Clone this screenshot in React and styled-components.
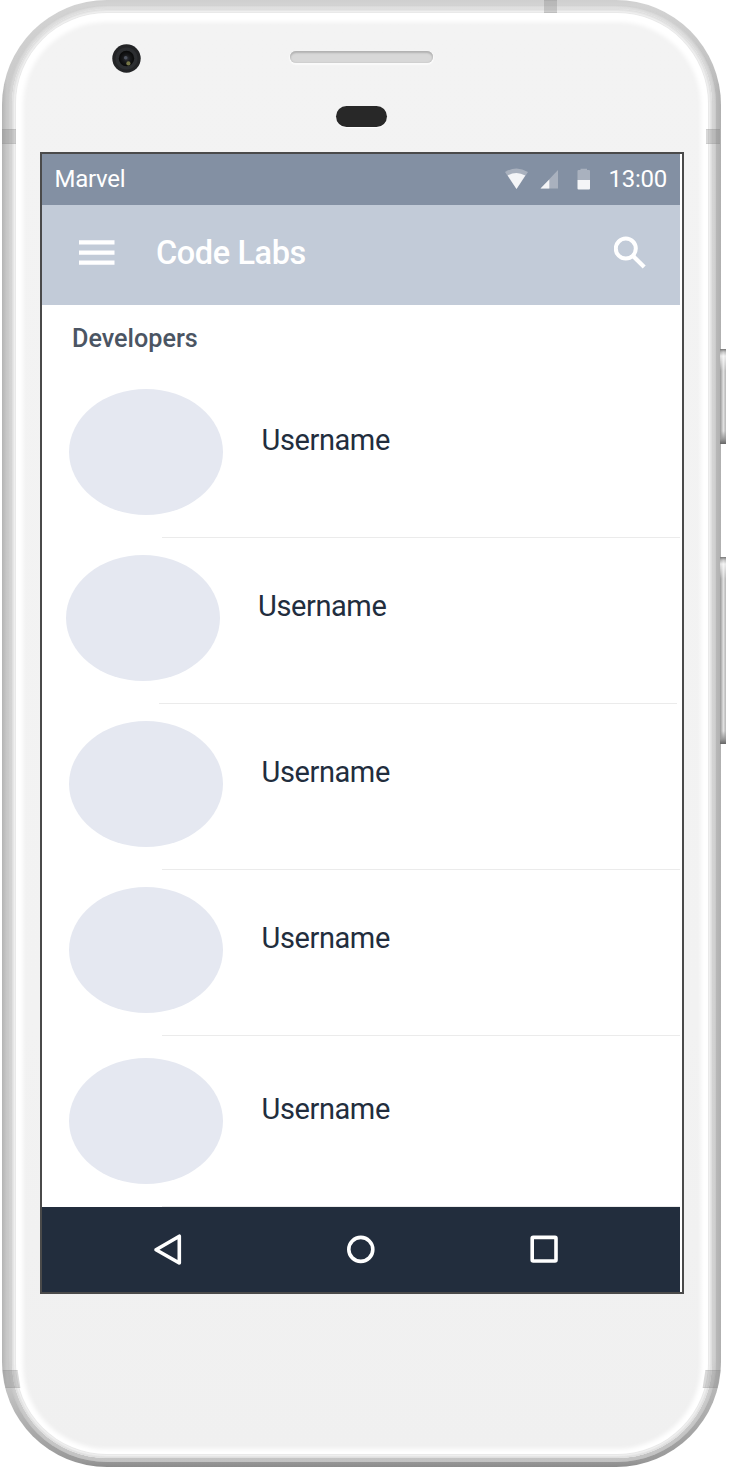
import React from "react";
import styled, { createGlobalStyle } from "styled-components";

const GlobalStyle = createGlobalStyle`
  * { box-sizing: border-box; }
  body { margin: 0; background: #fff; font-family: Roboto, "Liberation Sans", sans-serif; overflow: hidden; }
`;

const Stage = styled.main`
  position: relative;
  width: 726px;
  height: 1470px;
  padding-left: 2px;
  overflow: hidden;
`;

const Chassis = styled.div`
  width: 718.5px;
  height: 1467px;
  padding: 5px 5px 5px 6px;
  border-radius: 105px;
  background: linear-gradient(180deg, #cfcfcf 0, #d3d3d3 5px, rgba(211, 211, 211, 0) 90px, rgba(150, 150, 150, 0) 1380px, #999 1461px, #8c8c8c 100%),
    linear-gradient(90deg, #b4b4b4, #c9c9c9 5px, #c9c9c9 50%, #bababa 713px, #b0b0b0);
`;

const Rim = styled.div`
  height: 100%;
  padding: 4px;
  border-radius: 99px;
  background: linear-gradient(180deg, #e0e0e0, #d5d5d5 100px, #d2d2d2 1350px, #c4c4c4);
  box-shadow: inset 0 0 2px 1px rgba(190, 190, 190, 0.6);
`;

const Bevel = styled.div`
  height: 100%;
  padding: 4px;
  border-radius: 95px;
  background: #e9e9e9;
  box-shadow: inset 0 0 0 1px #dfdfdf, inset 0 0 0 2px #e6e6e6, inset 0 0 0 3px #efefef;
`;

const Face = styled.div`
  height: 100%;
  padding: 0 0 0 24px;
  border-radius: 91px;
  background: linear-gradient(180deg, #f3f3f3, #f2f2f2 70%, #f0f0f0);
  box-shadow: inset 0 2px 4px 7px #fff;
`;

const Bezel = styled.header`
  display: grid;
  grid-template-columns: 29px 143px;
  grid-template-rows: 29px 21px;
  column-gap: 149px;
  row-gap: 33px;
  align-items: center;
  height: 139px;
  padding: 31px 0 0 71.5px;
`;

const Camera = styled.svg`
  display: block;
  width: 29px;
  height: 29px;
`;

const Speaker = styled.div`
  height: 12px;
  margin-top: -3px;
  border-radius: 6px;
  background: #d8d8d8;
  box-shadow: inset 0 2px 2px #b2b2b2, inset 0 0 2px #bbb, 0 1px 1px 1px #fafafa;
`;

const Sensor = styled.div`
  grid-column: 2;
  justify-self: center;
  width: 51px;
  height: 21px;
  border-radius: 11px;
  background: #282828;
  box-shadow: 0 1px 1px #fff;
`;

const Screen = styled.section`
  display: flex;
  flex-direction: column;
  width: 644px;
  height: 1142px;
  padding-right: 2px;
  border: 2px solid #4a4a4a;
  background: #fff;
  overflow: hidden;
`;

const StatusBar = styled.div`
  display: flex;
  flex: none;
  align-items: center;
  justify-content: space-between;
  height: 51px;
  padding: 0 13px 0 12.5px;
  background: #8390a3;
  color: #fff;
  font-size: 24px;
  letter-spacing: -0.25px;
  line-height: 28px;
`;

const StatusLabel = styled.span`
  margin-top: -2px;
`;

const StatusIcons = styled.div`
  display: flex;
  align-items: center;
`;

const StatusGlyphs = styled.svg`
  display: block;
  width: 90px;
  height: 24px;
  margin-right: 13px;
`;

const Toolbar = styled.div`
  display: flex;
  flex: none;
  align-items: center;
  height: 99.5px;
  padding: 0 34px 4px 37px;
  background: #c2cbd8;
`;

const MenuIcon = styled.svg`
  width: 36px;
  height: 26px;
`;

const Title = styled.h1`
  flex: 1;
  margin: 0 0 0 41px;
  color: #fff;
  font-size: 32.5px;
  font-weight: 500;
  letter-spacing: -0.4px;
  line-height: 40px;
`;

const SearchIcon = styled.svg`
  width: 32px;
  height: 33px;
`;

const SectionTitle = styled.h2`
  flex: none;
  height: 67.5px;
  margin: 0;
  padding: 19.5px 0 0 30px;
  color: #4b5563;
  font-size: 25.2px;
  font-weight: 500;
  line-height: 30px;
`;

const List = styled.ul`
  flex: 1;
  min-height: 0;
  margin: 0;
  padding: 0;
  list-style: none;
  overflow: hidden;
`;

const Row = styled.li`
  display: flex;
  height: 166px;
  margin-top: ${(p) => p.$gap || 0}px;
  margin-left: ${(p) => -(p.$shift || 0)}px;
  margin-right: ${(p) => p.$shift || 0}px;
  padding: 17px 0 0 27px;
  background: linear-gradient(#ebebeb, #ebebeb) 120px 100% / 100% 1px no-repeat;
`;

const Avatar = styled.div`
  width: 154px;
  height: 126px;
  border-radius: 50%;
  background: #e5e8f1;
`;

const Name = styled.span`
  margin: 33.5px 0 0 38.5px;
  color: #222d3d;
  font-size: 29px;
  letter-spacing: -0.4px;
  line-height: 34px;
`;

const NavBar = styled.nav`
  flex: none;
  height: 85.5px;
  background: #222d3d;
`;

const NavIcons = styled.svg`
  display: block;
  width: 638px;
  height: 85px;
`;

const Seam = styled.i`
  position: absolute;
  left: ${(p) => p.$x}px;
  top: ${(p) => p.$y}px;
  width: ${(p) => p.$w || 14}px;
  height: ${(p) => p.$h || 15}px;
  background: rgba(125, 125, 125, 0.3);
  box-shadow: inset 0 1px rgba(125, 125, 125, 0.12), inset 0 -1px rgba(125, 125, 125, 0.12);
  transform: skewX(${(p) => p.$skew || 0}deg);
`;

const SideButton = styled.i`
  position: absolute;
  left: 720px;
  top: ${(p) => p.$y}px;
  width: 10px;
  height: ${(p) => p.$h}px;
  border-radius: 0 3px 3px 0;
  background: linear-gradient(180deg, #777 0, rgba(190, 190, 190, 0.6) 3px, rgba(255, 255, 255, 0.7) 7px, rgba(255, 255, 255, 0) 22px, rgba(136, 136, 136, 0) calc(100% - 13px), #999 calc(100% - 5px), #666 100%),
    linear-gradient(90deg, #999 0, #aaa 1px, #d9d9d9 3px, #e6e6e6 4px, #b5b5b5 5px, #c7c7c7 6px);
`;

const users = [
  { id: 1 },
  { id: 2, shift: 3.5 },
  { id: 3 },
  { id: 4 },
  { id: 5, gap: 5 },
];

export default function App() {
  return (
    <>
      <GlobalStyle />
      <Stage>
        <Chassis>
          <Rim>
            <Bevel>
              <Face>
                <Bezel>
                  <Camera viewBox="0 0 29 29">
                    <defs>
                      <radialGradient id="lens">
                        <stop offset="0" stopColor="#32343b" />
                        <stop offset="0.5" stopColor="#17181a" />
                        <stop offset="1" stopColor="#080808" />
                      </radialGradient>
                    </defs>
                    <circle cx="14.5" cy="14.5" r="14.2" fill="#232426" />
                    <circle cx="14.5" cy="14.5" r="11" fill="#2c2e31" />
                    <circle cx="14.5" cy="14.5" r="7.7" fill="url(#lens)" />
                    <circle cx="13.7" cy="13.7" r="1.8" fill="#4e535f" />
                    <circle cx="16.4" cy="19.4" r="2.1" fill="#777747" />
                  </Camera>
                  <Speaker />
                  <Sensor />
                </Bezel>
                <Screen>
                  <StatusBar>
                    <StatusLabel>Marvel</StatusLabel>
                    <StatusIcons>
                      <StatusGlyphs viewBox="0 0 90 24">
                        <path d="M0 4Q11.5-3 23 4L11.5 21Z" fill="#a9b1be" />
                        <path d="M2.7 7.5Q11.5 2.5 20.3 7.5L11.5 21Z" fill="#f4f5f7" />
                        <path d="M53 2V20.5H35.5Z" fill="#a9b1be" />
                        <path d="M44.3 11.5V20.5H35.5Z" fill="#f4f5f7" />
                        <path d="M72.5 3Q72.5 2 73.5 2H75.5V.7H82V2H84Q85 2 85 3V12H72.5Z" fill="#a9b1be" />
                        <path d="M72.5 12H85V20.5Q85 21.5 84 21.5H73.5Q72.5 21.5 72.5 20.5Z" fill="#f4f5f7" />
                      </StatusGlyphs>
                      <StatusLabel>13:00</StatusLabel>
                    </StatusIcons>
                  </StatusBar>
                  <Toolbar>
                    <MenuIcon viewBox="0 0 36 26" stroke="#fff" strokeWidth="4.3">
                      <path d="M0 2.4H35.5M0 12.6H35.5M0 22.7H35.5" />
                    </MenuIcon>
                    <Title>Code Labs</Title>
                    <SearchIcon viewBox="0 0 32 33" fill="none" stroke="#fff" strokeWidth="4">
                      <circle cx="11.8" cy="12.6" r="10" />
                      <path d="M19 19.9L30.2 31.1" strokeWidth="4.2" />
                    </SearchIcon>
                  </Toolbar>
                  <SectionTitle>Developers</SectionTitle>
                  <List>
                    {users.map((user) => (
                      <Row key={user.id} $shift={user.shift} $gap={user.gap}>
                        <Avatar />
                        <Name>Username</Name>
                      </Row>
                    ))}
                  </List>
                  <NavBar>
                    <NavIcons viewBox="0 0 638 85" fill="none" stroke="#fff" strokeWidth="3.6" strokeLinejoin="round">
                      <path d="M114 42.7L137.3 29.2V56Z" />
                      <circle cx="318.8" cy="42.4" r="12" />
                      <rect x="490.2" y="30.4" width="23.8" height="23.6" rx="1" />
                    </NavIcons>
                  </NavBar>
                </Screen>
              </Face>
            </Bevel>
          </Rim>
        </Chassis>
        <Seam $x={2} $y={129} />
        <Seam $x={706} $y={129} />
        <Seam $x={544} $y={0} $w={13} $h={13} />
        <Seam $x={4} $y={1370} $w={15} $h={18} $skew={9} />
        <Seam $x={703.5} $y={1370} $w={15} $h={18} $skew={-9} />
        <SideButton $y={349} $h={95} />
        <SideButton $y={557} $h={187} />
      </Stage>
    </>
  );
}
